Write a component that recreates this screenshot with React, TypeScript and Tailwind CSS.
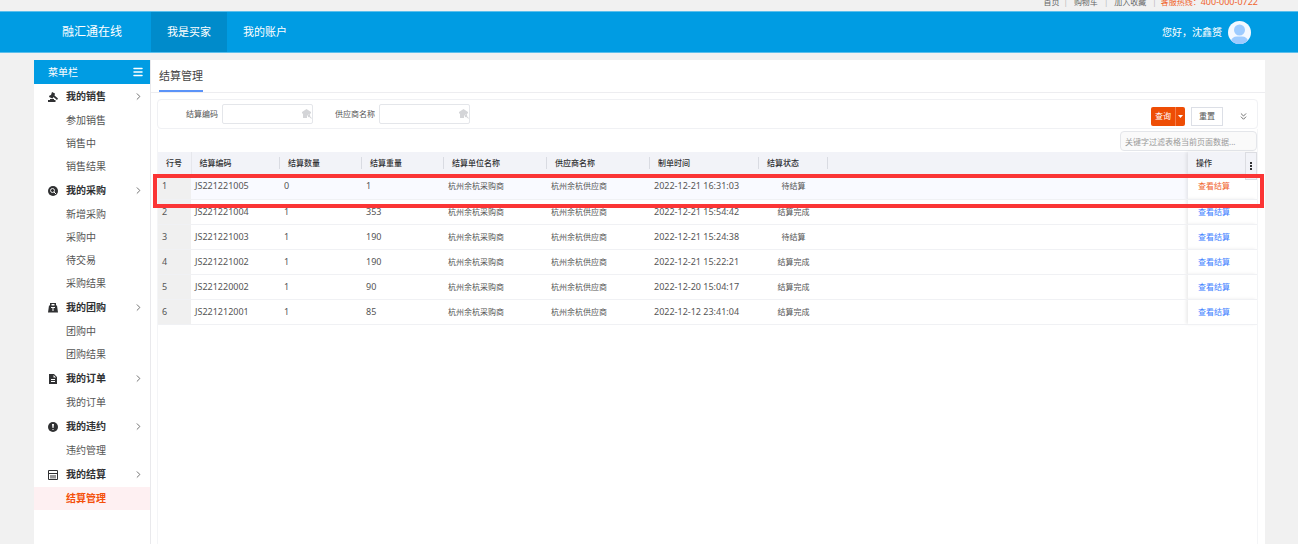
import type { ReactNode } from 'react';
import { ChevronRight, ChevronsDown, Menu } from 'lucide-react';

interface MenuGroup {
  title: string;
  icon: ReactNode;
  items: string[];
}

interface Settlement {
  code: string;
  count: number;
  weight: number;
  time: string;
  status: string;
}

const GavelIcon = () => (
  <svg className="w-[10px] h-[10px]" viewBox="0 0 20 20" fill="currentColor">
    <path d="M8 0l6 3-1 4 7 6-2 3-7-6-2 3-7-3 1-3 3-1z" />
    <path d="M4 14h8v2h3v4H0v-4h4z" />
  </svg>
);

const SearchIcon = () => (
  <svg className="w-[10px] h-[10px]" viewBox="0 0 20 20">
    <circle cx="10" cy="10" r="10" fill="currentColor" />
    <circle cx="9" cy="9" r="4" fill="none" stroke="white" strokeWidth="1.8" />
    <path d="M12 12l4 4" stroke="white" strokeWidth="2" />
  </svg>
);

const WeightIcon = () => (
  <svg className="w-[10px] h-[10px]" viewBox="0 0 20 20" fill="currentColor">
    <path fillRule="evenodd" d="M4 0h12v5h2l2 14H0L2 5h2zM7 2v3h6V2zM6 8v2h3v6h2v-6h3V8z" />
  </svg>
);

const FileIcon = () => (
  <svg className="w-[10px] h-[10px]" viewBox="0 0 20 20" fill="currentColor">
    <path fillRule="evenodd" d="M2 0h10l6 6v14H2zM11 2v5h5zM6 10v2h8v-2zM6 14v2h8v-2z" />
  </svg>
);

const AlertIcon = () => (
  <svg className="w-[10px] h-[10px]" viewBox="0 0 20 20">
    <circle cx="10" cy="10" r="10" fill="currentColor" />
    <path d="M8 4h4l-1 8H9zM9 14h2v2H9z" fill="white" />
  </svg>
);

const CalculatorIcon = () => (
  <svg className="w-[10px] h-[10px]" viewBox="0 0 20 20" fill="none" stroke="currentColor" strokeWidth="2">
    <path d="M1 1h18v18H1zM1 7h18" />
    <path d="M6 10v7M10 10v7M14 10v7" />
  </svg>
);

const LookupIcon = () => (
  <svg className="w-[10px] h-[10px] shrink-0 text-[#d4d5d8]" viewBox="0 0 20 20" fill="currentColor">
    <path d="M9 0l9 6v3h-2v3l-3-1-3 3v4H2V9H0V6z" />
    <circle cx="14" cy="14" r="2.5" />
    <path d="M15 16l2-1 3 4h-2z" />
  </svg>
);

const menu: MenuGroup[] = [
  { title: '我的销售', icon: <GavelIcon />, items: ['参加销售', '销售中', '销售结果'] },
  { title: '我的采购', icon: <SearchIcon />, items: ['新增采购', '采购中', '待交易', '采购结果'] },
  { title: '我的团购', icon: <WeightIcon />, items: ['团购中', '团购结果'] },
  { title: '我的订单', icon: <FileIcon />, items: ['我的订单'] },
  { title: '我的违约', icon: <AlertIcon />, items: ['违约管理'] },
  { title: '我的结算', icon: <CalculatorIcon />, items: ['结算管理'] },
];

const rows: Settlement[] = [
  { code: 'JS221221005', count: 0, weight: 1, time: '2022-12-21 16:31:03', status: '待结算' },
  { code: 'JS221221004', count: 1, weight: 353, time: '2022-12-21 15:54:42', status: '结算完成' },
  { code: 'JS221221003', count: 1, weight: 190, time: '2022-12-21 15:24:38', status: '待结算' },
  { code: 'JS221221002', count: 1, weight: 190, time: '2022-12-21 15:22:21', status: '结算完成' },
  { code: 'JS221220002', count: 1, weight: 90, time: '2022-12-20 15:04:17', status: '结算完成' },
  { code: 'JS221212001', count: 1, weight: 85, time: '2022-12-12 23:41:04', status: '结算完成' },
];

const columns = ['结算编码', '结算数量', '结算重量', '结算单位名称', '供应商名称', '制单时间', '结算状态'];

function TopLinks() {
  return (
    <nav className="h-[11px] flex items-end justify-end pr-10 text-[8px] leading-[18px] text-[#666] overflow-hidden">
      <div className="flex h-[18px]">
        <a href="#" className="pr-1">首页</a>
        <span className="text-[#bbb]">|</span>
        <a href="#" className="px-[6px]">购物车</a>
        <span className="text-[#bbb]">|</span>
        <a href="#" className="px-[6px]">加入收藏</a>
        <span className="text-[#bbb]">|</span>
        <span className="pl-1 text-[#f0642d]">
          客服热线：<span className="text-[9px]">400-000-0722</span>
        </span>
      </div>
    </nav>
  );
}

function Header() {
  return (
    <header className="h-[42px] flex items-stretch bg-[#009ce3] border-y border-[#5cbfec] text-white">
      <div className="w-[151px] pl-[62px] flex items-center text-[12px]">融汇通在线</div>
      <nav className="flex text-[11px]">
        <a href="#" className="px-4 flex items-center bg-[#008bcb]">我是买家</a>
        <a href="#" className="px-4 flex items-center">我的账户</a>
      </nav>
      <div className="ml-auto pr-[47px] flex items-center gap-[6px] text-[10px]">
        <span>您好，沈鑫赟</span>
        <svg className="w-[23px] h-[23px]" viewBox="0 0 46 46">
          <clipPath id="avatar">
            <circle cx="23" cy="23" r="23" />
          </clipPath>
          <g clipPath="url(#avatar)">
            <rect width="46" height="46" fill="#f3f8ff" />
            <circle cx="23" cy="18" r="11" fill="#9dcbff" />
            <path d="M6 46v-6q2-9 12-9h10q10 0 12 9v6z" fill="#9dcbff" />
          </g>
        </svg>
      </div>
    </header>
  );
}

function Sidebar() {
  return (
    <aside className="w-[117px] shrink-0 border-r border-[#e9e9ec] text-[10px]">
      <div className="h-6 flex items-center justify-between pl-[14px] pr-[6px] bg-[#009ce3] text-white">
        <span>菜单栏</span>
        <button aria-label="收起菜单">
          <Menu size={12} strokeWidth={3} />
        </button>
      </div>
      {menu.map((group) => (
        <section key={group.title}>
          <h3 className="h-[25px] flex items-center pl-[14px] pr-[6px] font-bold text-[#303133]">
            {group.icon}
            <span className="ml-2">{group.title}</span>
            <ChevronRight className="ml-auto text-[#666]" size={11} />
          </h3>
          <ul>
            {group.items.map((item) => (
              <li key={item}>
                <a
                  href="#"
                  className={
                    item === '结算管理'
                      ? 'h-[23px] flex items-center pl-8 bg-[#fef0f2] text-[#f4500b] font-bold'
                      : 'h-[23px] flex items-center pl-8 text-[#555]'
                  }
                >
                  {item}
                </a>
              </li>
            ))}
          </ul>
        </section>
      ))}
    </aside>
  );
}

function SearchField({ id, label }: { id: string; label: string }) {
  return (
    <div className="flex items-center gap-1">
      <label htmlFor={id} className="text-[#555]">{label}</label>
      <div className="w-[91px] h-5 flex items-center border border-[#e4e6ea] rounded-xs">
        <input id={id} type="text" className="w-full min-w-0 px-1 outline-none" />
        <LookupIcon />
      </div>
    </div>
  );
}

function SearchPanel() {
  return (
    <form className="h-[30px] flex items-center pl-7 pr-2 border border-[#f0f1f4] rounded text-[8px]">
      <div className="flex gap-[22px]">
        <SearchField id="code" label="结算编码" />
        <SearchField id="supplier" label="供应商名称" />
      </div>
      <div className="ml-auto flex items-center pt-1">
        <button type="button" className="h-[19px] w-6 rounded-l-xs bg-[#ee4d05] text-white">查询</button>
        <button
          type="button"
          aria-label="更多查询"
          className="h-[19px] w-[10px] flex items-center justify-center rounded-r-xs border-l border-[#f47d4a] bg-[#ee4d05]"
        >
          <svg className="w-[5px] h-[3px]" viewBox="0 0 10 6" fill="white">
            <path d="M0 0h10L5 6z" />
          </svg>
        </button>
        <button type="button" className="ml-[6px] h-[19px] w-8 border border-[#dcdfe6] text-[#555]">重置</button>
        <button type="button" aria-label="展开" className="ml-[15px] text-[#666]">
          <ChevronsDown size={11} />
        </button>
      </div>
    </form>
  );
}

function SettlementTable() {
  return (
    <div className="relative">
      <table className="w-full table-fixed text-left text-[8px] leading-3 text-[#555]">
        <colgroup>
          <col className="w-[33px]" />
          <col className="w-[89px]" />
          <col className="w-[82px]" />
          <col className="w-[82px]" />
          <col className="w-[103px]" />
          <col className="w-[103px]" />
          <col className="w-[109px]" />
          <col className="w-[69px]" />
          <col />
          <col className="w-[69px]" />
        </colgroup>
        <thead>
          <tr className="h-[22px] bg-[#f2f3f8] text-[#303133]">
            <th className="pl-2 font-medium border-r border-[#e6e7ec]">行号</th>
            {columns.map((name) => (
              <th key={name} className="p-0 font-medium">
                <div className="pl-2 border-r border-[#d9dbe2]">{name}</div>
              </th>
            ))}
            <th />
            <th className="pl-2 font-medium shadow-[-2px_0_3px_rgba(0,0,0,0.08)]">操作</th>
          </tr>
        </thead>
        <tbody>
          {rows.map((row, i) => (
            <tr key={row.code} className="h-[25px] border-b border-[#f0f1f4] first:bg-[#f9faff]">
              <td className="pl-1 text-[9px] bg-[#f0f0f0]">{i + 1}</td>
              <td className="pl-1 text-[9px]">{row.code}</td>
              <td className="pl-1 text-[9px]">{row.count}</td>
              <td className="pl-1 text-[9px]">{row.weight}</td>
              <td className="pl-1">杭州余杭采购商</td>
              <td className="pl-1">杭州余杭供应商</td>
              <td className="pl-1 text-[9px] whitespace-nowrap">{row.time}</td>
              <td className="text-center">{row.status}</td>
              <td />
              <td className="pl-[10px] bg-white shadow-[-2px_0_3px_rgba(0,0,0,0.08)]">
                <a href="#" className={i === 0 ? 'text-[#f0642d]' : 'text-[#4080ff]'}>查看结算</a>
              </td>
            </tr>
          ))}
        </tbody>
      </table>
      <button
        aria-label="列设置"
        className="absolute top-0 right-0 w-3 h-7 flex items-center justify-center border border-[#dcdde2] bg-[#f2f3f8] text-[#303133]"
      >
        <svg className="w-[2px] h-2" viewBox="0 0 2 8" fill="currentColor">
          <path d="M0 0h2v2H0zM0 3h2v2H0zM0 6h2v2H0z" />
        </svg>
      </button>
      <div className="absolute top-[22px] -left-[5px] -right-[7px] h-[34px] border-4 border-[#fb3535] pointer-events-none" />
    </div>
  );
}

export default function App() {
  return (
    <div className="min-h-screen flex flex-col bg-[#f1f1f1] font-['Noto_Sans','Noto_Sans_CJK_SC',sans-serif]">
      <TopLinks />
      <Header />
      <div className="grow flex mt-[7px] ml-[34px] mr-[33px] bg-white">
        <Sidebar />
        <main className="grow min-w-0 flex flex-col">
          <div className="h-[33px] px-2 border-b border-[#ededf0]">
            <h1 className="inline-block h-8 leading-8 border-b-2 border-[#5b93f8] text-[11px] text-[#444]">结算管理</h1>
          </div>
          <div className="grow flex flex-col pt-[6px] pl-[6px] pr-[7px]">
            <SearchPanel />
            <div className="grow flex flex-col border-x border-[#f4f5f7] pt-[2px]">
              <input
                type="text"
                aria-label="关键字过滤"
                placeholder="关键字过滤表格当前页面数据..."
                className="self-end w-[137px] h-5 mb-px px-1 border border-[#e4e6ea] rounded-sm bg-[#fafafa] text-[8px] placeholder:text-[#999] outline-none"
              />
              <SettlementTable />
            </div>
          </div>
        </main>
      </div>
    </div>
  );
}
